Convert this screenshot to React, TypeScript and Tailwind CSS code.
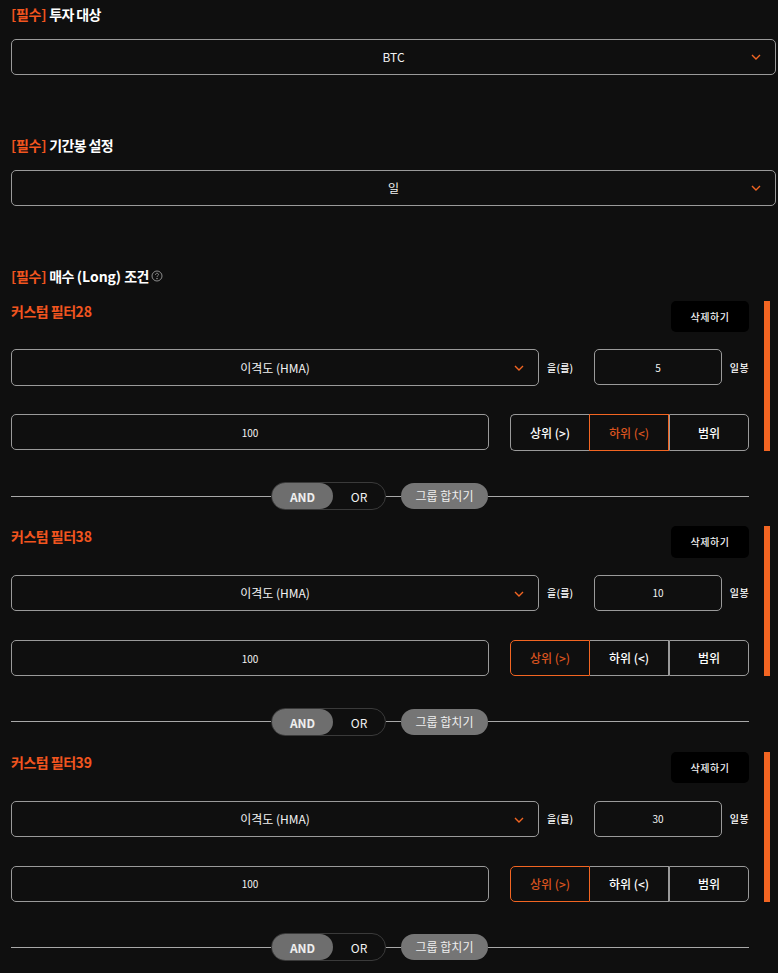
import React from "react";

const font = { fontFamily: '"Noto Sans CJK KR", "Noto Sans", sans-serif' };

function Chevron({ className = "" }: { className?: string }) {
  return (
    <svg viewBox="0 0 10 6" className={`w-[10px] h-[6px] ${className}`} fill="none" stroke="#f26522" strokeWidth="1.4">
      <path d="M1 1l4 4 4-4" />
    </svg>
  );
}

function Heading({ children, help }: { children: React.ReactNode; help?: boolean }) {
  return (
    <div className="h-[20px] flex items-center text-[14px] leading-[20px] font-bold text-white whitespace-pre">
      <span className="text-[#f2551f] mr-[3px] tracking-[-0.3px]">[필수]</span>
      <span className="tracking-[-0.05px]">{children}</span>
      {help && (
        <svg viewBox="0 0 12 12" className="w-[12px] h-[12px] ml-[2px]" fill="none" stroke="#9a9a9a" strokeWidth="0.9">
          <circle cx="6" cy="6" r="5" />
          <path d="M4.5 4.8c0-2 3-2 3-.2 0 1.1-1.5 1.1-1.5 2.3" />
          <circle cx="6" cy="8.6" r="0.4" />
        </svg>
      )}
    </div>
  );
}

function Select({ text, small }: { text: string; small?: boolean }) {
  return (
    <div
      className={`relative flex-1 border border-[#9a9a9a] rounded-[5px] flex items-center justify-center text-[#f2f2f2] text-[12px] ${
        small ? "h-[36.4px] pt-[0.4px]" : "h-[36px]"
      }`}
    >
      {text}
      <Chevron className={`absolute right-[14px] ${small ? "top-[15px]" : "top-[14px]"}`} />
    </div>
  );
}

function Seg({ value }: { value: "상위" | "하위" }) {
  const base = "flex items-center justify-center text-[12px] font-medium h-full border pt-[0.6px]";
  const on = "border-[#f26522] text-[#d9531f]";
  const off = "border-[#9a9a9a] text-white";
  const first = value === "상위" ? `w-[80px] ${on}` : `w-[79px] border-r-0 ${off}`;
  const second = value === "하위" ? `w-[80px] ${on}` : `w-[79px] border-l-0 ${off}`;
  return (
    <div className="flex w-[239px] h-[36.4px] ml-[21px]">
      <div className={`${base} rounded-l-[5px] ${first}`}>상위 (&gt;)</div>
      <div className={`${base} ${second}`}>하위 (&lt;)</div>
      <div className={`${base} w-[80px] rounded-r-[5px] ${off}`}>범위</div>
    </div>
  );
}

function Filter({ title, days, seg }: { title: string; days: string; seg: "상위" | "하위" }) {
  return (
    <div className="h-[225.6px]">
      <div className="flex h-[150.2px]">
        <div className="w-[738px]">
          <div className="flex justify-between h-[31.4px]">
            <div className="text-[14px] leading-[20px] font-bold text-[#f2551f]">
              <span className="tracking-[-0.5px]">커스텀 필터</span>
              {title}
            </div>
            <div className="w-[78px] h-[31.4px] bg-black rounded-[5px] flex items-center justify-center text-[10px] font-medium tracking-[0.5px] text-[#f2f2f2]">
              삭제하기
            </div>
          </div>
          <div className="flex items-start mt-[17.4px] h-[36.4px]">
            <Select text="이격도 (HMA)" small />
            <div className="w-[55px] pl-[8px] h-[36px] flex items-center text-[10px] font-medium tracking-[0.2px] text-white shrink-0">
              을(를)
            </div>
            <div className="w-[128px] h-[36px] border border-[#9a9a9a] rounded-[5px] flex items-center justify-center text-[10px] text-[#f2f2f2] shrink-0">
              {days}
            </div>
            <div className="w-[27px] h-[36px] flex items-center justify-end text-[10px] font-medium tracking-[0.4px] text-white shrink-0">
              일봉
            </div>
          </div>
          <div className="flex items-start mt-[28.6px]">
            <div className="flex-1 h-[36px] pt-[0.6px] border border-[#9a9a9a] rounded-[5px] flex items-center justify-center text-[10px] text-[#f2f2f2]">
              100
            </div>
            <Seg value={seg} />
          </div>
        </div>
        <div className="w-[6px] h-full bg-[#f26522] ml-[15px]" />
      </div>
      <div className="w-[738px] flex items-center h-[28px] mt-[31.4px]">
        <div className="w-[260px] h-px bg-[#a8a8a8]" />
        <div className="flex w-[115px] h-[28px] border border-[#3a3a3a] rounded-full items-center">
          <div className="w-[61px] h-[26px] pt-[2px] rounded-full bg-[#6e6e6e] text-[#eeeeee] font-bold text-[12px] flex items-center justify-center">
            AND
          </div>
          <div className="flex-1 pt-[2px] text-center text-[12px] text-[#f2f2f2]">OR</div>
        </div>
        <div className="w-[15px] h-px bg-[#a8a8a8]" />
        <div className="w-[87px] h-[26px] rounded-full bg-[#757575] text-[#eeeeee] text-[12px] flex items-center justify-center">
          그룹 합치기
        </div>
        <div className="flex-1 h-px bg-[#a8a8a8]" />
      </div>
    </div>
  );
}

const tight = "tracking-[-0.6px]";

export default function App() {
  return (
    <div className="w-[778px] h-[973px] overflow-hidden bg-[#0f0f0f] pl-[11px] pt-[4px]" style={font}>
      <Heading>
        <span className={tight}>투자 대상</span>
      </Heading>
      <div className="flex w-[765px] mt-[15px]">
        <Select text="BTC" />
      </div>
      <div className="mt-[60px]">
        <Heading>
          <span className={tight}>기간봉 설정</span>
        </Heading>
      </div>
      <div className="flex w-[765px] mt-[15px]">
        <Select text="일" />
      </div>
      <div className="mt-[60px]">
        <Heading help>
          <span className={tight}>매수</span> (Long) <span className={tight}>조건</span>
        </Heading>
      </div>
      <div className="mt-[14.6px]">
        <Filter title="28" days="5" seg="하위" />
        <Filter title="38" days="10" seg="상위" />
        <Filter title="39" days="30" seg="상위" />
      </div>
    </div>
  );
}
